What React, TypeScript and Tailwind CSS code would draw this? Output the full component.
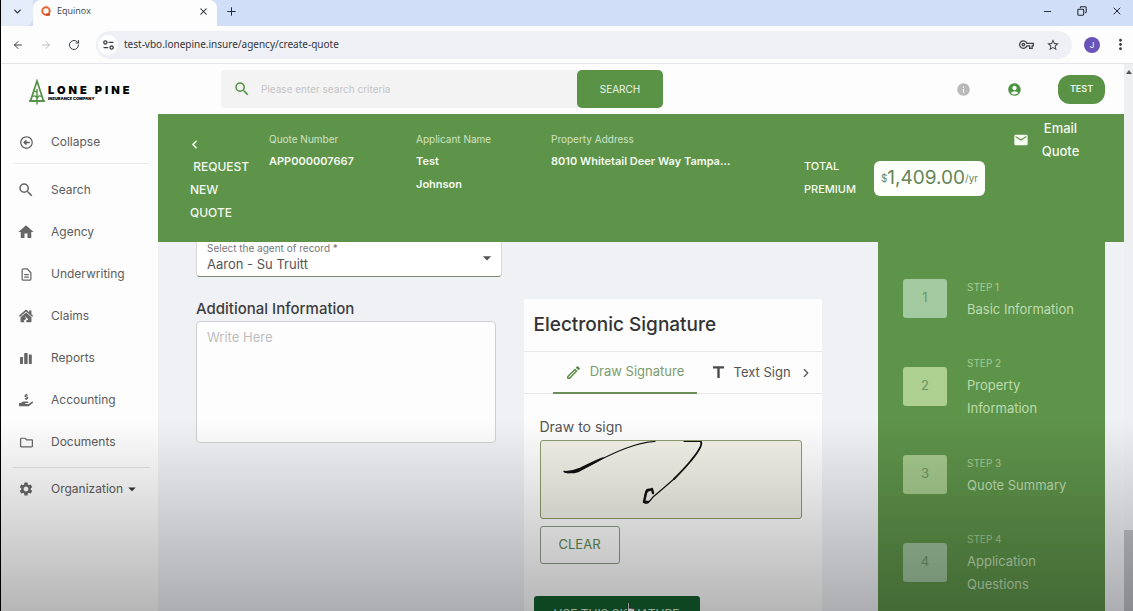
import * as React from "react"
import { ArrowLeft, ArrowRight, ChevronDown, ChevronLeft, ChevronRight, Copy, Minus, Plus, RotateCw, X } from "lucide-react"
import {
  MdAccountCircle,
  MdArrowDropDown,
  MdEmail,
  MdHome,
  MdInfo,
  MdMoreVert,
  MdOutlineEdit,
  MdOutlineVpnKey,
  MdSearch,
  MdSettings,
  MdStarBorder,
  MdTitle,
} from "react-icons/md"
import { FaHandHoldingUsd, FaHouseDamage, FaRegArrowAltCircleLeft, FaRegFolder } from "react-icons/fa"
import { HiOutlineDocumentText } from "react-icons/hi"

function BarsIcon({ size = 14 }: { size?: number }) {
  return (
    <svg width={size} height={size} viewBox="0 0 14 14" fill="currentColor">
      <rect x="1" y="6" width="3" height="7" rx="0.6" />
      <rect x="5.2" y="2" width="3.4" height="11" rx="0.6" />
      <rect x="9.8" y="3.5" width="3" height="9.5" rx="0.6" />
    </svg>
  )
}

const navItems = [
  { name: "Search", icon: MdSearch, size: 18 },
  { name: "Agency", icon: MdHome, size: 18 },
  { name: "Underwriting", icon: HiOutlineDocumentText, size: 15 },
  { name: "Claims", icon: FaHouseDamage, size: 14 },
  { name: "Reports", icon: BarsIcon, size: 14 },
  { name: "Accounting", icon: FaHandHoldingUsd, size: 14 },
  { name: "Documents", icon: FaRegFolder, size: 13 },
]

const steps = [
  { title: "Basic Information", box: "bg-[#a3c9a0]" },
  { title: "Property Information", box: "bg-[#adcf90]" },
  { title: "Quote Summary", box: "bg-[#a4c98c]" },
  { title: "Application Questions", box: "bg-[#9cc29b]" },
]

function BrowserChrome() {
  return (
    <div className="shrink-0">
      <div className="flex h-[26px] items-center bg-[#d0dff7] pb-1 text-[#1f2430]">
        <button aria-label="Search tabs" className="-mb-1 flex h-[26px] w-8 items-center justify-center rounded-br-lg bg-[#e4ecfa] pb-1">
          <ChevronDown size={11} strokeWidth={2.5} />
        </button>
        <div className="-mb-1 flex h-[26px] w-[184px] items-center rounded-t-lg bg-[#fdfdfe] px-2 pb-1">
          <svg width="10" height="10" viewBox="0 0 10 10" fill="none">
            <circle cx="5" cy="5" r="3.7" stroke="#e8622c" strokeWidth="2" />
            <path d="M5 8.7h4" stroke="#c93f1d" strokeWidth="2" />
          </svg>
          <span className="ml-1.5 flex-1 font-['Open_Sans',sans-serif] text-[9px] text-[#3c4043]">Equinox</span>
          <button aria-label="Close tab">
            <X size={11} strokeWidth={2.2} />
          </button>
        </div>
        <button aria-label="New tab" className="ml-2">
          <Plus size={13} strokeWidth={1.8} />
        </button>
        <div className="ml-auto flex items-center gap-6 pr-2.5">
          <button aria-label="Minimize"><Minus size={11} /></button>
          <button aria-label="Restore"><Copy size={10} strokeWidth={2.5} className="-scale-x-100" /></button>
          <button aria-label="Close"><X size={12} /></button>
        </div>
      </div>
      <div className="flex h-[38px] items-center border-b border-[#e4e5e8] bg-[#fdfdfe] text-[#3c4043]">
        <button aria-label="Back" className="ml-[11px]"><ArrowLeft size={12} /></button>
        <button aria-label="Forward" className="ml-4 text-[#b9bcc0]"><ArrowRight size={12} /></button>
        <button aria-label="Reload" className="ml-4"><RotateCw size={12} /></button>
        <div className="ml-4 flex h-7 flex-1 items-center rounded-full bg-[#eff0f5] pr-3 pl-0.5">
          <span className="flex size-5 items-center justify-center rounded-full bg-white">
            <svg width="11" height="10" viewBox="0 0 11 10" fill="none" stroke="currentColor" strokeWidth="1.3">
              <circle cx="2.4" cy="2.4" r="1.6" />
              <path d="M5.6 2.4H10.5M0.5 7.6H5.2" />
              <circle cx="8.6" cy="7.6" r="1.6" />
            </svg>
          </span>
          <input
            aria-label="Address"
            defaultValue="test-vbo.lonepine.insure/agency/create-quote"
            className="min-w-0 flex-1 bg-transparent px-1.5 font-['Noto_Sans',sans-serif] text-[10px] text-[#33363a] outline-none"
          />
          <MdOutlineVpnKey size={15} className="mr-3" />
          <MdStarBorder size={14} />
        </div>
        <span className="ml-3 flex size-4 items-center justify-center rounded-full bg-[#6b54b8] text-[8px] text-white">J</span>
        <button aria-label="Menu" className="mr-1 ml-3"><MdMoreVert size={17} /></button>
      </div>
    </div>
  )
}

function Logo() {
  return (
    <a href="#home" className="flex items-center gap-0.5">
      <svg width="18" height="26" viewBox="0 0 18 26" fill="none" stroke="#539145" strokeWidth="1.7">
        <path d="M9 2L15.500 22H2.500L9 2Z" />
        <path d="M9 10v15.500M6.300 13c1.500-1.500 2.700 0 2.700 1.500M4.500 17.500c2.500-1.500 4.500 0 4.500 3M13.500 17.500c-2.500-1.500-4.500 0-4.500 3" strokeWidth="1.4" />
        <path d="M1 22h16" />
      </svg>
      <span className="flex flex-col font-black text-black">
        <span className="text-[11px] leading-3 tracking-[3px]">LONE PINE</span>
        <span className="text-[4px] leading-[5px]">INSURANCE COMPANY</span>
      </span>
    </a>
  )
}

function Header() {
  return (
    <header className="flex h-[50px] shrink-0 items-center bg-[#fdfdfd]">
      <div className="w-[220px] shrink-0 pt-1.5 pl-[27px]">
        <Logo />
      </div>
      <form className="flex h-[38px] w-[442px] items-center rounded bg-[#f3f3f3] pl-3">
        <MdSearch size={18} className="text-[#539145]" />
        <input
          aria-label="Search criteria"
          placeholder="Please enter search criteria"
          className="min-w-0 flex-1 bg-transparent px-2.5 text-[10px] outline-none placeholder:text-[#c4c4c4]"
        />
        <button type="button" className="h-full w-[86px] rounded-[5px] bg-[#5a9246] text-[10px] text-[#eef6ea]">
          SEARCH
        </button>
      </form>
      <div className="ml-auto flex items-center pr-[19px]">
        <button aria-label="Info"><MdInfo size={15} className="text-[#b9b9b9]" /></button>
        <button aria-label="Account" className="ml-9"><MdAccountCircle size={15} className="text-[#4b9440]" /></button>
        <button className="ml-9 h-[29px] w-[47px] rounded-xl bg-[#5a9246] text-[9px] font-semibold text-[#eef6ea]">TEST</button>
      </div>
    </header>
  )
}

function Sidebar() {
  return (
    <nav className="w-[157px] shrink-0 bg-[#fdfdfd] pt-[7px] text-xs text-[#5c5c5c]">
      <button className="flex h-[42px] w-full items-center">
        <span className="flex w-[50px] justify-center"><FaRegArrowAltCircleLeft size={13} /></span>
        Collapse
      </button>
      <div className="mr-2 ml-3 border-t border-[#ececec]" />
      <div className="pt-[5px] pb-1">
        {navItems.map((item) => (
          <a key={item.name} href={"#" + item.name.toLowerCase()} className="flex h-[42px] items-center">
            <span className="flex w-[50px] justify-center text-[#666]"><item.icon size={item.size} /></span>
            {item.name}
          </a>
        ))}
      </div>
      <div className="mr-2 ml-3 border-t border-[#e2e2e2]" />
      <button className="flex h-[42px] w-full items-center">
        <span className="flex w-[50px] justify-center text-[#666]"><MdSettings size={16} /></span>
        Organization
        <MdArrowDropDown size={18} className="text-[#333]" />
      </button>
    </nav>
  )
}

function Field({ label, children }: { label: string; children: React.ReactNode }) {
  return (
    <div className="pt-3.5">
      <div className="text-[10px] leading-[22px] text-[#cfe3c4]">{label}</div>
      <div className="text-[11px] leading-[23px] font-semibold">{children}</div>
    </div>
  )
}

function QuoteBar() {
  return (
    <section className="flex h-32 shrink-0 bg-[#5e934a] pl-8 text-[#f4faf0]">
      <div className="w-[79px] shrink-0 pt-[19px]">
        <button aria-label="Back" className="flex h-[22px] items-center">
          <ChevronLeft size={13} strokeWidth={3} className="-ml-0.5" />
        </button>
        <h1 className="w-16 text-xs leading-[23px] font-medium">&nbsp;REQUEST NEW QUOTE</h1>
      </div>
      <div className="grid flex-1 grid-cols-[147px_135px_1fr]">
        <Field label="Quote Number">APP000007667</Field>
        <Field label="Applicant Name">
          <span className="block w-14">Test Johnson</span>
        </Field>
        <Field label="Property Address">8010 Whitetail Deer Way Tampa...</Field>
      </div>
      <div className="flex h-full items-center">
        <span className="w-[70px] text-[11px] leading-[23px] font-medium">TOTAL PREMIUM</span>
        <span className="flex h-[35px] w-[111px] items-center justify-center rounded-md bg-[#fcfffa] text-[#67845a]">
          <span className="text-[10px]">$</span>
          <span className="text-[19px]">1,409.00</span>
          <span className="text-[10px]">/yr</span>
        </span>
      </div>
      <button className="mr-11 ml-7 flex items-center gap-3 self-start pt-[3px]">
        <MdEmail size={16} />
        <span className="w-[39px] text-center text-[13px] leading-[23px] font-medium">Email Quote</span>
      </button>
    </section>
  )
}

function AgentForm() {
  return (
    <div>
      <div className="relative rounded-b border-x border-b border-x-[#d8d8d8] border-b-[#7d8a6c] bg-white">
        <label htmlFor="agent" className="block pl-2.5 text-[10px] leading-3 text-[#777]">
          Select the agent of record *
        </label>
        <select id="agent" className="block h-[22px] w-full appearance-none bg-transparent px-2.5 text-[13px] text-[#555] outline-none">
          <option>Aaron - Su Truitt</option>
        </select>
        <MdArrowDropDown size={20} className="pointer-events-none absolute top-1.5 right-1 text-[#555]" />
      </div>
      <label htmlFor="info" className="mt-[21px] block text-[15px] leading-[22px] font-medium text-[#3d3d3d]">
        Additional Information
      </label>
      <div className="mt-px pr-1.5">
        <textarea
          id="info"
          placeholder="Write Here"
          className="block h-[122px] w-full resize-none rounded border border-[#cfd0d2] bg-[#fdfdfd] px-2.5 py-1.5 text-[13px] outline-none placeholder:text-[#bdbdbd]"
        />
      </div>
    </div>
  )
}

function SignatureCard() {
  return (
    <div className="mt-[57px] bg-[#fdfdfd] text-[#555]">
      <h2 className="border-b border-[#e8e8e8] px-2.5 text-[19px] leading-[52px] font-medium text-[#333]">Electronic Signature</h2>
      <div role="tablist" className="flex h-[42px] border-b border-[#e8e8e8] pl-[29px] text-[13px]">
        <button role="tab" aria-selected="true" className="-mb-px flex w-36 items-center justify-center gap-2 border-b-2 border-[#6b8d58] whitespace-nowrap text-[#7b9c6a]">
          <MdOutlineEdit size={17} className="shrink-0 text-[#5b8a48]" />
          Draw Signature
        </button>
        <button role="tab" aria-selected="false" className="ml-3 flex items-center gap-1.5 whitespace-nowrap">
          <MdTitle size={19} className="text-[#4a4a4a]" />
          Text Sign
        </button>
        <button aria-label="Next tabs" className="ml-2">
          <ChevronRight size={14} />
        </button>
      </div>
      <div className="px-4 pt-[22px] pr-5">
        <p className="text-sm leading-[22px]">Draw to sign</p>
        <div className="mt-0.5 h-[79px] rounded-[3px] border border-[#8a9b6b] bg-[#f1f1e8]">
          <svg width="260" height="77" viewBox="0 0 260 77" fill="none" stroke="#111" strokeLinecap="round" strokeLinejoin="round">
            <path d="M24 31C28 32.500 33 31 38 29C62 18 88 2 114 0.500" strokeWidth="1.2" />
            <path d="M23 30.500C29 31 33 30 39 27.500C46 24 54 20 62 17C54 22 44 27 37 30.500C32 32 27 32 23 30.500Z" fill="#111" strokeWidth="1.4" />
            <path d="M143 0.500h17" strokeWidth="1" />
            <path d="M160 1C162 5 154 15 148 22C142 29 138 33 133 38" strokeWidth="1.9" />
            <path d="M133 38C126 44 118 51 112 56C109 60 107 63 104 62C102 61 104 55 105 50C106 47 109 48 111 49" strokeWidth="1.2" />
            <path d="M112 52L111 48C108 50 106 48 105 52L103 61L107 61" strokeWidth="2.4" />
          </svg>
        </div>
        <button className="mt-[7px] block h-[38px] w-20 rounded-[3px] border border-[#8d9a86] text-[13px] text-[#5e8a50]">CLEAR</button>
      </div>
      <div className="relative mt-8 ml-2.5 w-[166px]">
        <button className="h-9 w-full rounded-[3px] bg-[#14602f] text-xs whitespace-nowrap text-[#dcebdc]">USE THIS SIGNATURE</button>
        {/* hand pointer resting on the button */}
        <svg className="absolute top-1.5 left-[90px]" width="13" height="17" viewBox="0 0 13 17" fill="#fff" stroke="#222" strokeWidth="0.9">
          <path d="M3.500 1.500c0-1.200 1.800-1.200 1.800 0V6.400c.2-1 1.800-.9 1.800.2.300-.9 1.800-.7 1.800.4.400-.8 1.800-.5 1.800.6v4c0 3-1.400 4.600-3.900 4.600-2.600 0-3.600-1-4.700-3.100L.7 10c-.5-1 .8-1.900 1.600-1L3.500 10.500Z" />
        </svg>
      </div>
    </div>
  )
}

function Stepper() {
  return (
    <ol className="mr-[19px] w-[227px] shrink-0 bg-[#5e934a] pt-3 pl-[25px] text-[#bcdcae]">
      {steps.map((step, i) => (
        <li key={step.title} className="flex h-[88px] items-center gap-5">
          <span className={"flex h-[39px] w-11 shrink-0 items-center justify-center rounded-[3px] text-[13px] text-[#6c9465] " + step.box}>
            {i + 1}
          </span>
          <span className="w-28">
            <span className="block text-[10px] leading-[22px] text-[#a5cb94]">STEP {i + 1}</span>
            <span className="block text-[13px] leading-[23px]">{step.title}</span>
          </span>
        </li>
      ))}
    </ol>
  )
}

export default function App() {
  return (
    <div className="relative flex h-screen flex-col overflow-hidden border-l border-black bg-[#f0f1f5] font-[Inter,'Liberation_Sans',sans-serif]">
      <BrowserChrome />
      <div className="flex min-h-0 flex-1">
        <div className="flex min-w-0 flex-1 flex-col">
          <Header />
          <div className="flex min-h-0 flex-1">
            <Sidebar />
            <main className="flex min-w-0 flex-1 flex-col">
              <QuoteBar />
              <div className="flex min-h-0 flex-1 overflow-hidden">
                <div className="grid min-w-0 flex-1 grid-cols-[305fr_298fr] items-start gap-[22px] pr-14 pl-[38px]">
                  <AgentForm />
                  <SignatureCard />
                </div>
                <Stepper />
              </div>
            </main>
          </div>
        </div>
        <div className="flex w-[9px] shrink-0 flex-col items-center justify-between bg-[#eeeff1]">
          <span className="mt-1.5 border-x-[3px] border-b-4 border-x-transparent border-b-[#555]" />
          <span className="h-[81px] w-full bg-[#c0c1c3]" />
        </div>
      </div>
      {/* shade rising from the bottom edge */}
      <div className="pointer-events-none absolute inset-x-0 bottom-0 h-48 bg-linear-to-t from-black/28 to-transparent" />
    </div>
  )
}
